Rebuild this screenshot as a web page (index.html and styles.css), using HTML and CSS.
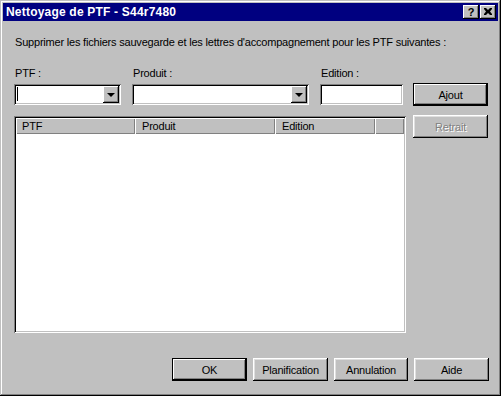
FILE: index.html
```html
<!DOCTYPE html>
<html>
<head>
<meta charset="utf-8">
<link rel="stylesheet" href="styles.css">
</head>
<body>
<div class="window">
  <div class="titlebar">
    <span class="title">Nettoyage de PTF - S44r7480</span>
    <div class="tbtns">
      <div class="tbtn help">?</div>
      <div class="tbtn close">
        <svg width="8" height="7" viewBox="0 0 8 7"><path d="M0 0h2l2 2 2-2h2v1L6 3.5 8 6v1H6L4 5 2 7H0V6l2-2.5L0 1z" fill="#000"/></svg>
      </div>
    </div>
  </div>
  <div class="content">
    <div class="instr">Supprimer les fichiers sauvegarde et les lettres d'accompagnement pour les PTF suivantes :</div>
    <div class="fields">
      <div class="lbl">PTF :</div>
      <div class="lbl">Produit :</div>
      <div class="lbl">Edition :</div>
      <div></div>
      <div class="field combo c1"><span class="caret"></span><div class="dd"><span class="tri"></span></div></div>
      <div class="field combo c2"><div class="dd"><span class="tri"></span></div></div>
      <div class="field c3"></div>
      <div class="btn default">Ajout</div>
    </div>
    <div class="mid">
      <div class="list">
        <div class="lhead">
          <div class="hc h1">PTF</div>
          <div class="hc h2">Produit</div>
          <div class="hc h3">Edition</div>
          <div class="hc h4"></div>
        </div>
      </div>
      <div class="btn disabled">Retrait</div>
    </div>
    <div class="bottom">
      <div class="btn default">OK</div>
      <div class="btn">Planification</div>
      <div class="btn">Annulation</div>
      <div class="btn">Aide</div>
    </div>
  </div>
</div>
</body>
</html>
```
FILE: styles.css
```css
html, body { margin: 0; padding: 0; background: #c0c0c0; }
body { font-family: "Liberation Sans", Arial, sans-serif; font-size: 11px; letter-spacing: -0.2px; color: #000; }
.window {
  width: 501px; height: 396px; box-sizing: border-box; padding: 3px;
  background: #c0c0c0;
  box-shadow: inset -1px -1px #000, inset 1px 1px #c0c0c0, inset -2px -2px #808080, inset 2px 2px #fff;
  display: flex; flex-direction: column;
}
.titlebar {
  height: 18px; background: #000080; display: flex; align-items: center; justify-content: space-between;
  padding: 0 2px 0 3px;
}
.title { color: #fff; font-family: "Liberation Sans", Arial, sans-serif; font-weight: bold; font-size: 12px; letter-spacing: 0.2px; }
.tbtns { display: flex; gap: 1px; }
.tbtn {
  width: 16px; height: 14px; box-sizing: border-box; background: #c0c0c0;
  box-shadow: inset -1px -1px #000, inset 1px 1px #fff, inset -2px -2px #808080;
  display: flex; align-items: center; justify-content: center;
  font-family: "Liberation Sans", Arial, sans-serif; font-weight: bold; font-size: 11px; line-height: 14px; letter-spacing: 0;
}
.tbtn.help { padding-bottom: 1px; }
.tbtn.close svg { margin-top: -1px; }
.content { flex: 1; padding: 0 9px 0 11px; display: flex; flex-direction: column; }
.instr { margin-top: 14px; padding-left: 1px; line-height: 14px; height: 14px; white-space: nowrap; }
.fields {
  margin-top: 17px;
  display: grid; grid-template-columns: 107px 177px 83px 75px; column-gap: 11px;
  grid-template-rows: 14px 23px; row-gap: 3px;
}
.fields > :nth-child(8) { margin-left: -1px; }
.lbl { line-height: 14px; padding-left: 1px; }
.field {
  height: 21px; box-sizing: border-box; align-self: center; background: #fff; position: relative;
  box-shadow: inset 1px 1px #808080, inset -1px -1px #fff, inset 2px 2px #000, inset -2px -2px #c0c0c0;
}
.dd {
  position: absolute; right: 2px; top: 2px; width: 16px; height: 17px; box-sizing: border-box; background: #c0c0c0;
  box-shadow: inset -1px -1px #000, inset 1px 1px #fff, inset -2px -2px #808080, inset 2px 2px #c0c0c0;
  display: flex; align-items: center; justify-content: center;
}
.tri { width: 0; height: 0; border-left: 4px solid transparent; border-right: 4px solid transparent; border-top: 4px solid #000; margin-left: -1px; }
.caret { position: absolute; left: 3px; top: 3px; width: 1px; height: 14px; background: #000; }
.btn {
  width: 75px; height: 23px; box-sizing: border-box; background: #c0c0c0;
  box-shadow: inset -1px -1px #000, inset 1px 1px #fff, inset -2px -2px #808080, inset 2px 2px #dfdfdf;
  display: flex; align-items: center; justify-content: center; line-height: 14px;
}
.btn.default {
  box-shadow: inset 0 0 0 1px #000, inset -2px -2px #000, inset 2px 2px #fff, inset -3px -3px #808080;
}
.btn.disabled { color: #808080; text-shadow: 1px 1px #fff; }
.mid { margin-top: 10px; display: flex; align-items: flex-start; gap: 7px; }
.mid .btn { margin-top: -1px; }
.list {
  width: 392px; height: 217px; box-sizing: border-box; background: #fff; padding: 2px;
  box-shadow: inset 1px 1px #808080, inset -1px -1px #fff, inset 2px 2px #000, inset -2px -2px #c0c0c0;
}
.lhead { display: flex; height: 16px; }
.hc {
  height: 16px; box-sizing: border-box; background: #c0c0c0; line-height: 16px;
  box-shadow: inset 1px 1px #fff, inset -1px -1px #808080; padding-left: 6px;
}
.h1 { width: 119px; padding-left: 6px; }
.h2 { width: 140px; padding-left: 7px; }
.h3 { width: 100px; padding-left: 7px; }
.h4 { flex: 1; }
.bottom { margin-top: auto; margin-bottom: 12px; display: flex; justify-content: flex-end; gap: 6px; }
.bottom .btn:nth-child(3) { width: 74px; }
```
